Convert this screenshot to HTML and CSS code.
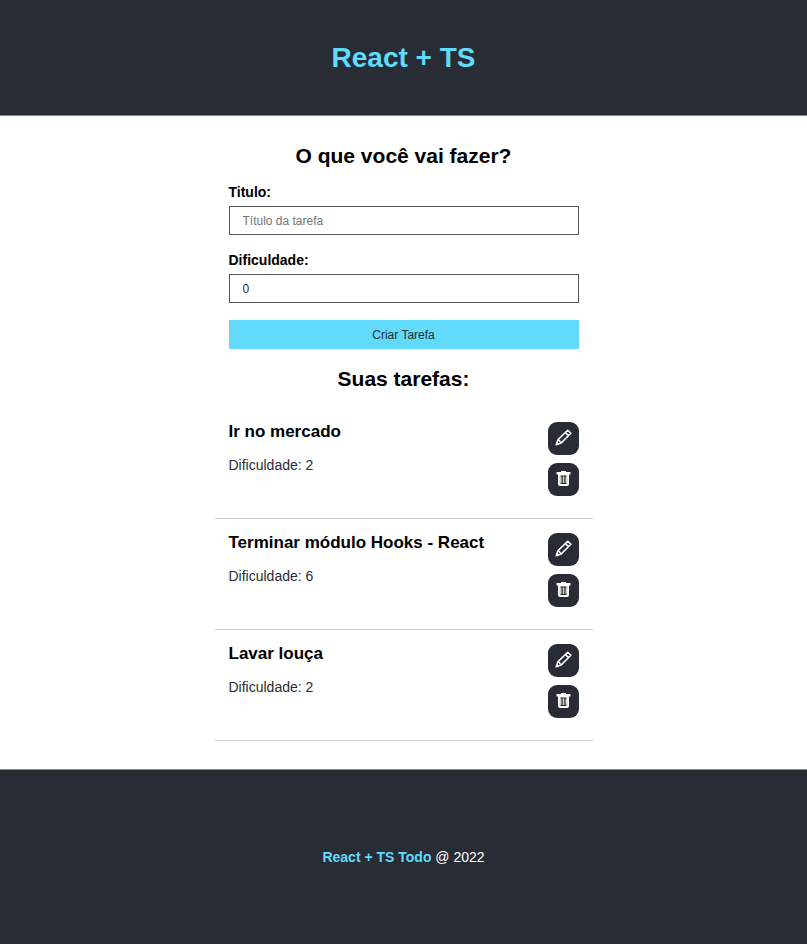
FILE: index.html
```html
<!DOCTYPE html>
<html lang="pt-BR">
<head>
  <meta charset="utf-8">
  <meta name="viewport" content="width=device-width, initial-scale=1">
  <title>React + TS</title>
  <link rel="stylesheet" href="styles.css">
</head>
<body>
  <svg class="sprite" aria-hidden="true">
    <symbol id="pencil" viewBox="0 0 17 17">
      <path d="M1.200 15.800 2.800 10.900 12.700 1.200 15.900 4.300 6 14.100zM10.400 3.500l3.100 3.100M2.800 10.900l1.600.5.400 1.100 1.200 1.600" fill="none" stroke="currentColor" stroke-width="1.500" stroke-linejoin="round"/>
      <path d="M.800 16.200 2 12.800 4.200 15z"/>
    </symbol>
    <symbol id="trash" viewBox="0 0 17 17">
      <path d="M1.500 2h4.500V1h5v1h4.500v2.500H1.500z"/>
      <path d="M3 4h11v10q0 2-2 2H5q-2 0-2-2z"/>
      <path d="M4.500 5.500h8v8.500h-8z" fill="#d3d3c6"/>
      <path d="M5.500 5.500h6v1h-1v6.500h1v1h-6v-1h1V6.500h-1zM7.700 6.500V13h1.600V6.500z" fill="#282c34" fill-rule="evenodd"/>
    </symbol>
  </svg>

  <header class="header">
    <h1>React + TS</h1>
  </header>

  <main class="main">
    <section class="create">
      <h2>O que você vai fazer?</h2>
      <form class="form">
        <div class="field">
          <label for="title">Titulo:</label>
          <input type="text" id="title" name="title" placeholder="Título da tarefa">
        </div>
        <div class="field">
          <label for="difficulty">Dificuldade:</label>
          <input type="text" inputmode="numeric" id="difficulty" name="difficulty" value="0">
        </div>
        <button class="submit" type="submit">Criar Tarefa</button>
      </form>
    </section>

    <section>
      <h2>Suas tarefas:</h2>
      <ul class="tasks">
        <li class="task">
          <div class="details">
            <h3>Ir no mercado</h3>
            <p>Dificuldade: 2</p>
          </div>
          <div class="actions">
            <button type="button" aria-label="Editar"><svg class="icon"><use href="#pencil"/></svg></button>
            <button type="button" aria-label="Excluir"><svg class="icon"><use href="#trash"/></svg></button>
          </div>
        </li>
        <li class="task">
          <div class="details">
            <h3>Terminar módulo Hooks - React</h3>
            <p>Dificuldade: 6</p>
          </div>
          <div class="actions">
            <button type="button" aria-label="Editar"><svg class="icon"><use href="#pencil"/></svg></button>
            <button type="button" aria-label="Excluir"><svg class="icon"><use href="#trash"/></svg></button>
          </div>
        </li>
        <li class="task">
          <div class="details">
            <h3>Lavar louça</h3>
            <p>Dificuldade: 2</p>
          </div>
          <div class="actions">
            <button type="button" aria-label="Editar"><svg class="icon"><use href="#pencil"/></svg></button>
            <button type="button" aria-label="Excluir"><svg class="icon"><use href="#trash"/></svg></button>
          </div>
        </li>
      </ul>
    </section>
  </main>

  <footer class="footer">
    <p><strong>React + TS Todo</strong> @ 2022</p>
  </footer>
</body>
</html>
```
FILE: styles.css
```css
* {
  box-sizing: border-box;
  margin: 0;
  padding: 0;
}

body {
  font-family: "Liberation Sans", Arial, sans-serif;
  font-size: 14px;
  line-height: 16px;
  color: #000;
  background: #fff;
}

.sprite {
  display: none;
}

.header {
  padding: 41px 14px;
  text-align: center;
  color: #61dafb;
  background: #282c34;
  border-bottom: 1px solid #85888d;
}

h1 {
  font-size: 28px;
  line-height: 33px;
}

h2 {
  font-size: 21px;
  line-height: 24px;
  text-align: center;
}

h3 {
  font-size: 17px;
  line-height: 20px;
}

.main {
  max-width: 378px;
  margin: 0 auto;
  padding: 28px 0;
}

.create {
  padding: 0 14px;
  margin-bottom: 18px;
}

.form {
  display: flex;
  flex-direction: column;
  gap: 17px;
  margin-top: 16px;
}

.field {
  display: flex;
  flex-direction: column;
  gap: 6px;
}

.field label {
  font-weight: bold;
}

.field input {
  width: 100%;
  height: 29px;
  padding: 0 13px;
  font: inherit;
  font-size: 12px;
  color: #282c34;
  background: #fff;
  border: 1px solid #53565c;
  border-radius: 0;
}

.field input::placeholder {
  color: #757575;
}

.submit {
  height: 29px;
  font: inherit;
  font-size: 12px;
  color: #282c34;
  background: #61dafb;
  border: 0;
  cursor: pointer;
}

.tasks {
  margin-top: 17px;
  list-style: none;
}

.task {
  display: flex;
  justify-content: space-between;
  padding: 14px;
  border-bottom: 1px solid #d0d0d0;
}

.details {
  display: flex;
  flex-direction: column;
  gap: 15px;
}

.details p {
  color: #282c34;
}

.actions {
  display: flex;
  flex-direction: column;
  gap: 8px;
  padding-bottom: 8px;
}

.actions button {
  display: flex;
  justify-content: center;
  width: 31px;
  height: 33px;
  padding-top: 7px;
  color: #fff;
  background: #282c34;
  border: 0;
  border-radius: 9px;
  cursor: pointer;
}

.icon {
  width: 17px;
  height: 17px;
  fill: currentColor;
}

.footer {
  padding: 79px 14px;
  text-align: center;
  color: #fff;
  background: #282c34;
  border-top: 1px solid #85888d;
}

.footer strong {
  color: #61dafb;
}
```
